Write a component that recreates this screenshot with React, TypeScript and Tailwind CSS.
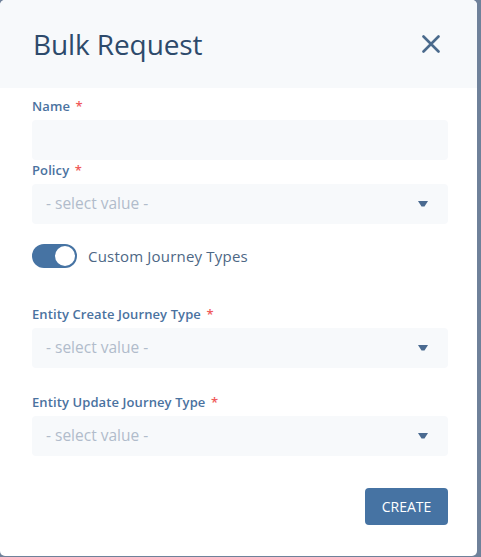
const font = { fontFamily: '"Open Sans", "Liberation Sans", sans-serif' };

function Label({ text }: { text: string }) {
  return (
    <div className="text-[13px] font-semibold leading-[18px] text-[#4a72a0] mb-[5px] tracking-[0.1px]">
      {text} <span className="text-[#f05a5a] ml-[2px]">*</span>
    </div>
  );
}

function SelectBox() {
  return (
    <div className="h-10 rounded bg-[#f7f9fb] flex items-center justify-between pl-[14px] pr-[20px]">
      <span className="text-[15.5px] text-[#b1bccb]">- select value -</span>
      <svg width="10" height="6" viewBox="0 0 10 6">
        <path d="M0 0h10L6.5 5.5h-3z" fill="#4a6a90" />
      </svg>
    </div>
  );
}

export default function App() {
  return (
    <div className="w-[481px] h-[557px] bg-[#6f819a] flex" style={font}>
      <div className="w-[477px] h-[556px] bg-white rounded-[5px] overflow-hidden flex flex-col">
        <div className="h-[88px] bg-[#f7f9fb] flex items-center justify-between pl-[33px] pr-[37px] shrink-0">
          <h1 className="text-[28px] text-[#2d4a6b] tracking-[-0.1px]">Bulk Request</h1>
          <svg width="18" height="18" viewBox="0 0 18 18">
            <path d="M1.5 1.5l15 15M16.5 1.5l-15 15" stroke="#4a6a8c" strokeWidth="2.6" strokeLinecap="round" />
          </svg>
        </div>
        <div className="pl-8 pr-[29px] pt-[9px] flex flex-col">
          <Label text="Name" />
          <div className="h-10 rounded bg-[#f7f9fb]" />
          <div className="mt-px">
            <Label text="Policy" />
          </div>
          <SelectBox />
          <div className="flex items-center mt-5 h-6">
            <div className="w-[45px] h-6 rounded-full bg-[#4673a3] flex items-center justify-end pr-[2px]">
              <div className="w-5 h-5 rounded-full bg-white" />
            </div>
            <span className="ml-[11px] text-[15px] tracking-[0.2px] text-[#4d6785]">Custom Journey Types</span>
          </div>
          <div className="mt-[37px]">
            <Label text="Entity Create Journey Type" />
          </div>
          <SelectBox />
          <div className="mt-[25px]">
            <Label text="Entity Update Journey Type" />
          </div>
          <SelectBox />
          <div className="flex justify-end mt-8">
            <button className="w-[83px] h-[37px] rounded bg-[#4673a3] text-white text-[14px]">CREATE</button>
          </div>
        </div>
      </div>
    </div>
  );
}
